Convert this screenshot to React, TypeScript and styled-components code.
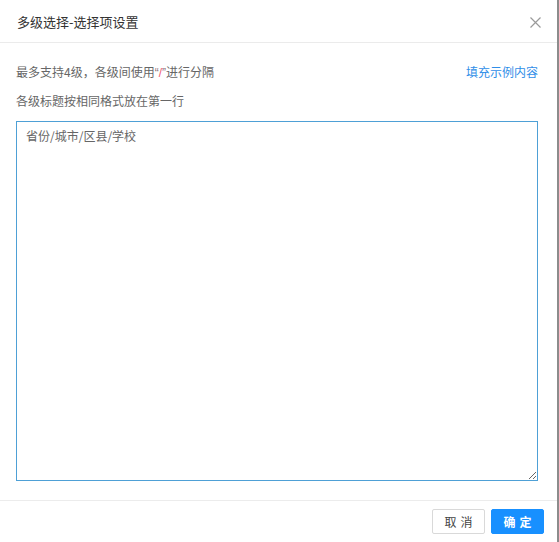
import React from "react";
import styled, { createGlobalStyle } from "styled-components";

const Global = createGlobalStyle`
  html, body { margin: 0; padding: 0; background: #8c8c8c; }
  body { font-family: "Noto Sans CJK SC", "Noto Sans", sans-serif; }
  * { box-sizing: border-box; }
`;

const Page = styled.div`
  width: 559px;
  height: 542px;
  display: flex;
`;

const Dialog = styled.div`
  width: 557px;
  height: 542px;
  background: #fff;
  display: flex;
  flex-direction: column;
`;

const Header = styled.div`
  height: 43px;
  flex: none;
  display: flex;
  align-items: center;
  justify-content: space-between;
  padding: 0 14px 0 17px;
  border-bottom: 1px solid #ebebeb;
`;

const Title = styled.div`
  font-size: 13px;
  color: #333;
  line-height: 20px;
  margin-top: 1px;
`;

const CloseBtn = styled.button`
  width: 16px;
  height: 16px;
  border: 0;
  padding: 0;
  background: transparent;
  display: flex;
  align-items: center;
  justify-content: center;
  margin-top: 3px;
  cursor: pointer;
`;

const Body = styled.div`
  flex: 1;
  display: flex;
  flex-direction: column;
  padding: 19px 19px 19px 16px;
`;

const Line = styled.div<{ $gap?: number }>`
  display: flex;
  justify-content: space-between;
  align-items: center;
  height: 20px;
  font-size: 12px;
  line-height: 20px;
  color: #666;
  margin-bottom: ${(p) => p.$gap ?? 0}px;
`;

const Quote = styled.span`
  font-family: "Liberation Sans", sans-serif;
  line-height: 1;
  color: #8a6f78;
`;

const Slash = styled.span`
  font-family: "Liberation Sans", sans-serif;
  line-height: 1;
  color: #ef5b72;
`;

const Link = styled.a`
  color: #2f8ee8;
  font-size: 12px;
  cursor: pointer;
  text-decoration: none;
`;

const Area = styled.textarea`
  width: 522px;
  height: 360px;
  flex: none;
  border: 1px solid #4ea0d6;
  outline: none;
  resize: vertical;
  padding: 5px 9px;
  font-family: "Noto Sans CJK SC", "Noto Sans", sans-serif;
  font-size: 12px;
  line-height: 18px;
  color: #666;
  background: #fff;
`;

const Footer = styled.div`
  height: 42px;
  flex: none;
  border-top: 1px solid #ececec;
  display: flex;
  justify-content: flex-end;
  align-items: flex-start;
  gap: 6px;
  padding: 8px 13px 0 0;
`;

const Button = styled.button<{ $primary?: boolean }>`
  width: 53px;
  height: 25px;
  border: 1px solid ${(p) => (p.$primary ? "#1890ff" : "#d9d9d9")};
  background: ${(p) => (p.$primary ? "#1890ff" : "#fff")};
  color: ${(p) => (p.$primary ? "#fff" : "#444")};
  font-family: "Noto Sans CJK SC", "Noto Sans", sans-serif;
  font-size: 12px;
  font-weight: ${(p) => (p.$primary ? 600 : 400)};
  letter-spacing: 4px;
  padding: 0 0 0 4px;
  border-radius: 2px;
  display: flex;
  align-items: center;
  justify-content: center;
  cursor: pointer;
`;

export default function App() {
  return (
    <>
      <Global />
      <Page>
        <Dialog>
          <Header>
            <Title>多级选择-选择项设置</Title>
            <CloseBtn aria-label="close">
              <svg width="11" height="11" viewBox="0 0 11 11">
                <path d="M0.5 0.5 L10.5 10.5 M10.5 0.5 L0.5 10.5" stroke="#9a9a9a" strokeWidth="1.2" fill="none" />
              </svg>
            </CloseBtn>
          </Header>
          <Body>
            <Line $gap={9}>
              <span>
                最多支持4级，各级间使用<Quote>“</Quote><Slash>/</Slash><Quote>”</Quote>进行分隔
              </span>
              <Link>填充示例内容</Link>
            </Line>
            <Line $gap={10}>
              <span>各级标题按相同格式放在第一行</span>
            </Line>
            <Area defaultValue="省份/城市/区县/学校" />
          </Body>
          <Footer>
            <Button>取消</Button>
            <Button $primary>确定</Button>
          </Footer>
        </Dialog>
      </Page>
    </>
  );
}
